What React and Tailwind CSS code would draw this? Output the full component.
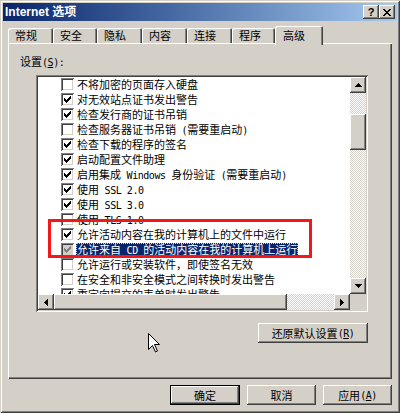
import React from 'react'

const RAISED = 'shadow-[inset_-1px_-1px_#404040,inset_1px_1px_#fff,inset_-2px_-2px_#808080,inset_2px_2px_#d4d0c8]'
const SUNKEN = 'shadow-[inset_1px_1px_#808080,inset_-1px_-1px_#fff,inset_2px_2px_#404040,inset_-2px_-2px_#d4d0c8]'
const CHECKER = 'bg-[repeating-conic-gradient(#fff_0%_25%,#d4d0c8_0%_50%)] bg-[length:2px_2px]'
const MONO = "font-['DejaVu_Sans_Mono',monospace] text-[10px] tracking-[-0.45px]"

const TABS = [
  { label: '常规', w: 'w-[45px]' },
  { label: '安全', w: 'w-[44px]' },
  { label: '隐私', w: 'w-[45px]' },
  { label: '内容', w: 'w-[45px]' },
  { label: '连接', w: 'w-[45px]' },
  { label: '程序', w: 'w-[43px]' },
]

const ITEMS = [
  { on: false, text: '不将加密的页面存入硬盘' },
  { on: true, text: '对无效站点证书发出警告' },
  { on: true, text: '检查发行商的证书吊销' },
  { on: false, text: '检查服务器证书吊销 (需要重启动)' },
  { on: true, text: '检查下载的程序的签名' },
  { on: true, text: '启动配置文件助理' },
  { on: true, text: '启用集成 Windows 身份验证 (需要重启动)' },
  { on: true, text: '使用 SSL 2.0' },
  { on: true, text: '使用 SSL 3.0' },
  { on: false, text: '使用 TLS 1.0' },
  { on: true, text: '允许活动内容在我的计算机上的文件中运行' },
  { on: true, text: '允许来自 CD 的活动内容在我的计算机上运行', sel: true, dis: true },
  { on: false, text: '允许运行或安装软件，即使签名无效' },
  { on: false, text: '在安全和非安全模式之间转换时发出警告' },
  { on: true, text: '重定向提交的表单时发出警告' },
]

// ascii runs get the half-width mono face, like SimSun's latin glyphs
function mix(text) {
  return text.split(/([\x00-\x7f]+)/).filter(Boolean).map((part, i) =>
    /^[\x00-\x7f]+$/.test(part)
      ? <span key={i} className={`${MONO} whitespace-pre`}>{part}</span>
      : <span key={i}>{part}</span>
  )
}

function Tick({ color }) {
  return (
    <svg width="7" height="7" viewBox="0 0 7 7" shapeRendering="crispEdges">
      <path fill={color} d="M0 2h1v3H0z M1 3h1v3H1z M2 4h1v3H2z M3 3h1v3H3z M4 2h1v3H4z M5 1h1v3H5z M6 0h1v3H6z" />
    </svg>
  )
}

function Check({ on, dis }) {
  return (
    <span className={`w-[13px] h-[13px] shrink-0 flex items-center justify-center ${SUNKEN} ${dis ? 'bg-[#d4d0c8]' : 'bg-white'}`}>
      {on && <Tick color={dis ? '#808080' : '#000'} />}
    </span>
  )
}

function Arrow({ dir }) {
  const d = {
    up: 'M3 0h1v1h1v1h1v1h1v1H0V3h1V2h1V1h1z',
    down: 'M0 0h7v1H6v1H5v1H4v1H3V3H2V2H1V1H0z',
    left: 'M3 0h1v7H3V6H2V5H1V4H0V3h1V2h1V1h1z',
    right: 'M0 0h1v1h1v1h1v1h1v1H3v1H2v1H1v1H0z',
  }[dir]
  const vert = dir === 'up' || dir === 'down'
  return (
    <svg width={vert ? 7 : 4} height={vert ? 4 : 7} viewBox={vert ? '0 0 7 4' : '0 0 4 7'} shapeRendering="crispEdges">
      <path fill="#000" d={d} />
    </svg>
  )
}

function SbButton({ dir }) {
  return (
    <div className={`w-[16px] h-[16px] shrink-0 bg-[#d4d0c8] flex items-center justify-center ${RAISED}`}>
      <Arrow dir={dir} />
    </div>
  )
}

function Button({ children, w, def }) {
  return (
    <div className={`${w} h-[20px] bg-[#d4d0c8] flex items-center justify-center text-[11px] leading-[11px] ${def ? 'border border-black' : ''}`}>
      <div className={`w-full h-full flex items-center justify-center ${RAISED}`}>{children}</div>
    </div>
  )
}

export default function App() {
  return (
    <div className={`relative w-[400px] h-[413px] bg-[#d4d0c8] p-[3px] flex flex-col font-['Noto_Sans_CJK_SC',sans-serif] text-black shadow-[inset_1px_1px_#d4d0c8,inset_-1px_-1px_#404040,inset_2px_2px_#fff,inset_-2px_-2px_#808080]`}>

      {/* title bar */}
      <div className="h-[18px] shrink-0 flex items-center justify-between bg-linear-to-r from-[#0a246a] to-[#a6caf0] pl-[2px] pr-[2px]">
        <span className="text-white font-bold text-[12px] leading-[12px] font-['Liberation_Sans','Noto_Sans_CJK_SC',sans-serif]">Internet 选项</span>
        <div className="flex">
          <div className={`w-[16px] h-[14px] bg-[#d4d0c8] flex items-center justify-center ${RAISED}`}>
            <span className="font-bold text-[11px] leading-[11px] font-['Liberation_Sans',sans-serif]">?</span>
          </div>
          <div className={`w-[16px] h-[14px] bg-[#d4d0c8] flex items-center justify-center ${RAISED}`}>
            <svg width="8" height="7" viewBox="0 0 8 7" shapeRendering="crispEdges">
              <path fill="#000" d="M0 0h2v1H0z M6 0h2v1H6z M1 1h2v1H1z M5 1h2v1H5z M2 2h4v1H2z M3 3h2v1H3z M2 4h4v1H2z M1 5h2v1H1z M5 5h2v1H5z M0 6h2v1H0z M6 6h2v1H6z" />
            </svg>
          </div>
        </div>
      </div>

      {/* tabs */}
      <div className="h-[22px] shrink-0 flex items-end px-[5px]">
        {TABS.map(t => (
          <div key={t.label} className={`${t.w} h-[15px] pl-[7px] pt-[2px] text-[11px] leading-[11px] rounded-t-[2px] shadow-[inset_1px_1px_#fff,inset_-1px_0_#404040,inset_-2px_0_#808080]`}>
            {t.label}
          </div>
        ))}
        <div className="relative z-10 w-[48px] h-[19px] -mb-[2px] pl-[8px] pt-[4px] text-[11px] leading-[11px] bg-[#d4d0c8] rounded-t-[2px] shadow-[inset_1px_1px_#fff,inset_-1px_0_#404040,inset_-2px_0_#808080]">
          高级
        </div>
      </div>

      {/* panel */}
      <div className="mx-[5px] h-[336px] shrink-0 pl-[12px] pt-[12px] shadow-[inset_1px_1px_#fff,inset_-1px_-1px_#404040,inset_-2px_-2px_#808080]">
        <div className="text-[11px] leading-[12px]">
          设置<span className={MONO}>(<u>S</u>):</span>
        </div>

        <div className="ml-[16px] mt-[6px] w-[332px] flex flex-col">
          {/* list box */}
          <div className={`h-[237px] p-[2px] bg-white ${SUNKEN}`}>
            <div className="flex h-[217px]">
              <div className="flex-1 overflow-hidden">
                {ITEMS.map((it, i) => (
                  <div key={i} className="h-[15px] flex items-center pl-[23px] text-[11px] whitespace-nowrap">
                    <Check on={it.on} dis={it.dis} />
                    <span className={`ml-[2px] px-[1px] h-[13px] leading-[13px] ${it.sel ? 'bg-[#0a246a] text-white outline outline-dotted outline-[#e8d39a] -outline-offset-1' : ''}`}>
                      {mix(it.text)}
                    </span>
                  </div>
                ))}
              </div>
              {/* vertical scrollbar */}
              <div className="w-[16px] flex flex-col">
                <SbButton dir="up" />
                <div className={`h-[21px] ${CHECKER}`} />
                <div className={`h-[36px] bg-[#d4d0c8] ${RAISED}`} />
                <div className={`flex-1 ${CHECKER}`} />
                <SbButton dir="down" />
              </div>
            </div>
            {/* horizontal scrollbar */}
            <div className="flex h-[16px]">
              <SbButton dir="left" />
              <div className={`w-[233px] bg-[#d4d0c8] ${RAISED}`} />
              <div className={`flex-1 ${CHECKER}`} />
              <SbButton dir="right" />
              <div className="w-[16px] bg-[#d4d0c8]" />
            </div>
          </div>

          <div className="self-end mt-[11px]">
            <Button w="w-[110px]">
              还原默认设置<span className={MONO}>(<u>R</u>)</span>
            </Button>
          </div>
        </div>
      </div>

      {/* dialog buttons */}
      <div className="flex justify-end gap-[7px] pr-[5px] mt-[6px]">
        <Button w="w-[70px]" def>确定</Button>
        <Button w="w-[69px]">取消</Button>
        <Button w="w-[69px]">
          应用<span className={MONO}>(<u>A</u>)</span>
        </Button>
      </div>

      {/* red annotation box */}
      <div className="absolute left-[48px] top-[219px] w-[264px] h-[39px] border-[3px] border-[#f01818]" />

      {/* mouse pointer */}
      <svg className="absolute left-[148px] top-[333px]" width="12" height="20" viewBox="0 0 12 20">
        <path d="M0.5 0.5 L0.5 16.5 L4.5 12.5 L7.5 19 L9.5 18 L6.5 11.5 L11.5 11.5 Z" fill="#fff" stroke="#000" strokeWidth="1" />
      </svg>
    </div>
  )
}
